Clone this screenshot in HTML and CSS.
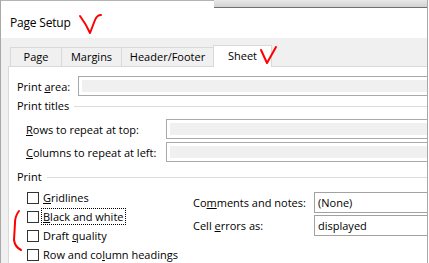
FILE: index.html
```html
<!DOCTYPE html>
<html lang="en">
<head>
    <meta charset="UTF-8">
    <meta name="viewport" content="width=device-width, initial-scale=1.0">
    <title>Page Setup</title>
    <link rel="stylesheet" href="styles.css">
</head>
<body>
    <div class="window">
        <div class="topstrip">
            <div class="strip-left"></div>
            <div class="strip-right"></div>
        </div>
        <div class="titlebar">Page Setup</div>
        <div class="content">
            <div class="tabs">
                <div class="tab tab-page">Page</div>
                <div class="tab tab-margins">Margins</div>
                <div class="tab tab-header">Header/Footer</div>
                <div class="tab tab-sheet active">Sheet</div>
            </div>
            <div class="panel">
                <div class="field-row area-row">
                    <span class="label">Print <u>a</u>rea:</span>
                    <div class="textbox"></div>
                </div>
                <div class="group-head titles-head">
                    <span>Print titles</span>
                    <div class="rule"></div>
                </div>
                <div class="field-row indent rows-row">
                    <span class="label"><u>R</u>ows to repeat at top:</span>
                    <div class="textbox"></div>
                </div>
                <div class="field-row indent cols-row">
                    <span class="label"><u>C</u>olumns to repeat at left:</span>
                    <div class="textbox"></div>
                </div>
                <div class="group-head print-head">
                    <span>Print</span>
                    <div class="rule"></div>
                </div>
                <div class="print-grid">
                    <div class="checks">
                        <div class="check"><span class="box"></span><span><u>G</u>ridlines</span></div>
                        <div class="check"><span class="box"></span><span class="focus"><u>B</u>lack and white</span></div>
                        <div class="check"><span class="box"></span><span>Draft <u>q</u>uality</span></div>
                        <div class="check"><span class="box"></span><span>Row and co<u>l</u>umn headings</span></div>
                    </div>
                    <div class="selects">
                        <div class="select-row">
                            <span class="label">Co<u>m</u>ments and notes:</span>
                            <div class="dropdown">(None)</div>
                        </div>
                        <div class="select-row">
                            <span class="label">Cell <u>e</u>rrors as:</span>
                            <div class="dropdown">displayed</div>
                        </div>
                    </div>
                </div>
            </div>
        </div>
        <!-- hand-drawn red marks on top of the screenshot -->
        <svg class="marks" width="429" height="263" viewBox="0 0 429 263">
            <path d="M80 16 Q86 24 90 33 L95 20 Q97 15 101 15" />
            <path d="M261 50 L267 63 L276 47" />
            <path d="M19 211 Q15 216 15 223 L14 240 Q15 247 21 250" />
        </svg>
    </div>
</body>
</html>
```

FILE: styles.css
```css
* {
    box-sizing: border-box;
}
body {
    margin: 0;
    width: 429px;
    height: 263px;
    overflow: hidden;
    background: #fff;
    font-family: "Open Sans", "Noto Sans", sans-serif;
    font-size: 11px;
    color: #000;
}
.window {
    position: relative;
    width: 428px;
    height: 263px;
    border-left: 1px solid #a8a8a8;
    border-right: 1px solid #a8a8a8;
    background: #f0f0f0;
}
.topstrip {
    display: flex;
    height: 8px;
}
.strip-left {
    width: 213px;
    background: #fff;
    border-top: 1px solid #b4b4b4;
}
.strip-right {
    flex: 1;
    background: linear-gradient(#e8e8e8, #d2d2d2);
    border-bottom: 1px solid #707070;
}
.titlebar {
    height: 30px;
    background: #fff;
    padding: 5px 0 0 9px;
    font-size: 12px;
    line-height: 20px;
    letter-spacing: -0.2px;
}
.content {
    padding: 7px 0 0 7px;
}
.tabs {
    display: flex;
    align-items: flex-end;
    height: 21px;
    padding-left: 2px;
    position: relative;
    z-index: 1;
}
.tab {
    height: 19px;
    border: 1px solid #d9d9d9;
    border-bottom: none;
    margin-left: -1px;
    text-align: center;
    line-height: 18px;
    background: #f0f0f0;
}
.tab:first-child {
    margin-left: 0;
}
.tab-page { width: 52px; }
.tab-margins { width: 61px; }
.tab-header { width: 93px; }
.tab-sheet { width: 59px; }
.tab.active {
    height: 22px;
    margin-bottom: -1px;
    background: #fff;
    line-height: 20px;
}
.panel {
    height: 200px;
    background: #fff;
    border-top: 1px solid #d9d9d9;
    border-left: 1px solid #d9d9d9;
    padding: 9px 0 0 8px;
}
.field-row {
    display: flex;
    align-items: center;
}
.area-row .label {
    width: 61px;
}
.indent {
    padding-left: 9px;
}
.indent .label {
    width: 140px;
}
.rows-row {
    margin-top: 5px;
}
.cols-row {
    margin-top: 3px;
}
.textbox {
    flex: 1;
    height: 20px;
    border: 1px solid #a9a9a9;
    border-right: 0;
    padding: 3px 0 3px 3px;
    background: linear-gradient(#f0f0f0, #f0f0f0) content-box, #fff;
}
.group-head {
    display: flex;
    align-items: center;
    gap: 5px;
    line-height: 16px;
}
.titles-head {
    margin-top: 2px;
}
.print-head {
    margin-top: 7px;
}
.rule {
    flex: 1;
    height: 1px;
    background: #dcdcdc;
}
.print-grid {
    display: flex;
    margin-top: 3px;
}
.checks {
    width: 176px;
    padding-left: 10px;
}
.check {
    display: flex;
    align-items: center;
    height: 19px;
}
.box {
    width: 12px;
    height: 12px;
    border: 1px solid #333;
    margin-right: 4px;
    background: #fff;
}
.focus {
    border: 1px dotted #000;
    padding: 0 1px;
    margin-left: -2px;
    line-height: 15px;
}
.selects {
    flex: 1;
    padding-top: 4px;
}
.select-row {
    display: flex;
    align-items: center;
    margin-bottom: 2px;
}
.select-row .label {
    width: 121px;
}
.dropdown {
    flex: 1;
    height: 21px;
    border: 1px solid #a2a2a2;
    border-right: 0;
    padding-left: 3px;
    line-height: 19px;
    background: #fff;
}
.marks {
    position: absolute;
    left: -1px;
    top: 0;
    z-index: 2;
    pointer-events: none;
}
.marks path {
    fill: none;
    stroke: #f00;
    stroke-width: 2;
    stroke-linecap: round;
    stroke-linejoin: round;
}
```
